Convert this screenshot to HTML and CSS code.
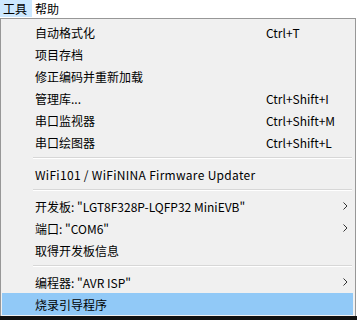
FILE: index.html
```html
<!DOCTYPE html>
<html lang="zh">
<head>
<meta charset="utf-8">
<link rel="stylesheet" href="styles.css">
</head>
<body>
<div class="menubar">
  <span class="top-item active">工具</span>
  <span class="top-item">帮助</span>
</div>
<div class="dropdown">
  <div class="row"><span class="label">自动格式化</span><span class="key">Ctrl+T</span></div>
  <div class="row"><span class="label">项目存档</span></div>
  <div class="row"><span class="label">修正编码并重新加载</span></div>
  <div class="row"><span class="label">管理库...</span><span class="key">Ctrl+Shift+I</span></div>
  <div class="row"><span class="label">串口监视器</span><span class="key">Ctrl+Shift+M</span></div>
  <div class="row"><span class="label">串口绘图器</span><span class="key">Ctrl+Shift+L</span></div>
  <div class="sep"></div>
  <div class="row"><span class="label wide">WiFi101 / WiFiNINA Firmware Updater</span></div>
  <div class="sep"></div>
  <div class="row"><span class="label">开发板: "LGT8F328P-LQFP32 MiniEVB"</span><svg class="arrow" width="5" height="8" viewBox="0 0 5 8"><path d="M0.5 0.5 L4 4 L0.5 7.5" fill="none" stroke="#333" stroke-width="1"/></svg></div>
  <div class="row"><span class="label">端口: "COM6"</span><svg class="arrow" width="5" height="8" viewBox="0 0 5 8"><path d="M0.5 0.5 L4 4 L0.5 7.5" fill="none" stroke="#333" stroke-width="1"/></svg></div>
  <div class="row"><span class="label">取得开发板信息</span></div>
  <div class="sep"></div>
  <div class="row"><span class="label">编程器: "AVR ISP"</span><svg class="arrow" width="5" height="8" viewBox="0 0 5 8"><path d="M0.5 0.5 L4 4 L0.5 7.5" fill="none" stroke="#333" stroke-width="1"/></svg></div>
  <div class="row selected"><span class="label">烧录引导程序</span></div>
</div>
<div class="shadow"></div>
</body>
</html>
```

FILE: styles.css
```css
html, body {
  margin: 0;
  padding: 0;
  background: #ffffff;
  font-family: "Noto Sans CJK SC", "Noto Sans", sans-serif;
  font-size: 12px;
  color: #000;
}
.menubar {
  height: 18px;
  display: flex;
  align-items: flex-start;
  background: #fff;
}
.top-item {
  height: 17px;
  line-height: 17px;
  padding: 0 5px 0 3px;
  box-sizing: border-box;
}
.top-item.active {
  background: #cce8ff;
  width: 32px;
}
.dropdown {
  width: 356px;
  box-sizing: border-box;
  border: 1px solid #979797;
  border-bottom: none;
  background: #f0f0f0;
  padding: 2px 2px 1px 1px;
}
.row {
  height: 22px;
  display: flex;
  align-items: center;
}
.row .label {
  padding-left: 33px;
  flex: 1;
  white-space: nowrap;
}
.row .label.wide {
  letter-spacing: 0.3px;
}
.row .key {
  width: 87px;
  white-space: nowrap;
}
.row .arrow {
  margin-right: 5px;
}
.row.selected {
  background: #91c9f7;
}
.sep {
  height: 10px;
  display: flex;
  align-items: center;
  padding-left: 31px;
  padding-right: 1px;
}
.sep::before {
  content: "";
  flex: 1;
  height: 1px;
  background: #d7d7d7;
  border-bottom: 1px solid #fff;
}
.shadow {
  height: 10px;
  background: #111;
}
```
